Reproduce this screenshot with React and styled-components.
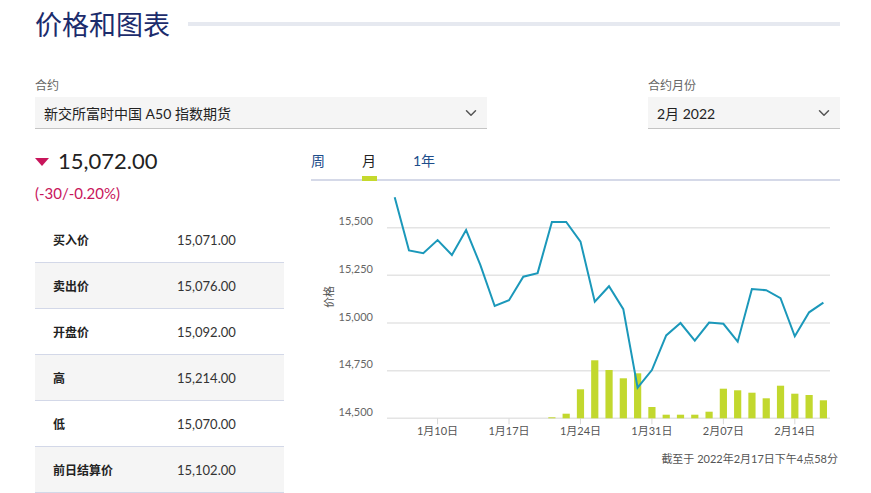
import React from 'react';
import styled, { createGlobalStyle } from 'styled-components';
import { ChevronDown } from 'lucide-react';

const GlobalStyle = createGlobalStyle`
  body {
    margin: 0;
    background: #ffffff;
    font-family: Lato, "Noto Sans CJK SC", sans-serif;
    color: #222;
  }
`;

const Page = styled.div`
  width: 871px;
  box-sizing: border-box;
  padding: 8px 31px 0 35px;
`;

const Header = styled.header`
  display: flex;
  align-items: center;
  gap: 18px;
  height: 32px;
`;

const Title = styled.h1`
  margin: 0;
  font-size: 27px;
  line-height: 32px;
  font-weight: 400;
  color: #1c2c6c;
  font-family: "Noto Sans CJK SC", sans-serif;
`;

const TitleRule = styled.div`
  flex: 1;
  height: 4px;
  background: #e6e9f0;
`;

const SelectRow = styled.div`
  display: flex;
  justify-content: space-between;
  margin-top: 38px;
`;

const Field = styled.div`
  width: ${(p) => p.width}px;
`;

const FieldLabel = styled.div`
  font-size: 12px;
  line-height: 16px;
  color: #666;
  margin-bottom: 3px;
`;

const Select = styled.div`
  display: flex;
  align-items: center;
  justify-content: space-between;
  height: 32px;
  box-sizing: border-box;
  padding: 0 7px 0 9px;
  background: #f5f5f5;
  border-bottom: 1px solid #c4c4c4;
  font-size: 14px;
  color: #222;
  svg {
    color: #555;
  }
`;

const Body = styled.div`
  display: flex;
  gap: 27px;
  margin-top: 19px;
`;

const Summary = styled.div`
  width: 249px;
`;

const PriceRow = styled.div`
  display: flex;
  align-items: center;
  gap: 9px;
  height: 26px;
`;

const DownArrow = styled.span`
  width: 0;
  height: 0;
  border-left: 7px solid transparent;
  border-right: 7px solid transparent;
  border-top: 8px solid #c8155b;
  margin-top: 2px;
`;

const Price = styled.div`
  font-size: 22px;
  line-height: 26px;
  color: #222;
`;

const Change = styled.div`
  margin-top: 9px;
  font-size: 15px;
  line-height: 20px;
  color: #c8155b;
`;

const Table = styled.div`
  margin-top: 14px;
`;

const Row = styled.div`
  display: flex;
  align-items: center;
  height: 46px;
  box-sizing: border-box;
  border-bottom: 1px solid #d3d8e8;
  background: ${(p) => (p.shaded ? '#f5f5f5' : '#ffffff')};
`;

const RowLabel = styled.div`
  width: 124px;
  padding-left: 18px;
  font-family: "Noto Sans CJK SC", sans-serif;
  font-weight: 700;
  font-size: 12px;
  color: #222;
`;

const RowValue = styled.div`
  font-size: 13px;
  color: #333;
`;

const ChartPanel = styled.div`
  flex: 1;
`;

const Tabs = styled.div`
  display: flex;
  padding-top: 3px;
  border-bottom: 2px solid #d5d9e8;
`;

const Tab = styled.div`
  position: relative;
  width: 51px;
  padding: 0 0 8px 0;
  font-size: 14px;
  line-height: 20px;
  color: ${(p) => (p.active ? '#222' : '#1d4d8a')};
  &::after {
    content: '';
    display: ${(p) => (p.active ? 'block' : 'none')};
    position: absolute;
    left: 0;
    bottom: -2px;
    width: 15px;
    height: 5px;
    background: #c5d92d;
  }
`;

const ChartSvg = styled.svg`
  display: block;
  font-family: Lato, "Noto Sans CJK SC", sans-serif;
`;

const Footnote = styled.div`
  text-align: right;
  font-size: 11px;
  line-height: 16px;
  color: #555;
  padding-right: 2px;
`;

const prices = [
  15660, 15381, 15366, 15435, 15357, 15488, 15304, 15089, 15119, 15243, 15262,
  15530, 15530, 15427, 15112, 15193, 15073, 14661, 14753, 14935, 15000, 14907,
  15002, 14996, 14902, 15178, 15172, 15130, 14930, 15056, 15107,
];

// volume bar heights in px, starting from trading day 11
const volumes = [
  1, 4.6, 29, 58, 48.3, 40, 45, 11.3, 3.6, 3.6, 3.6, 6.6, 29.6, 28, 25.6, 20,
  32.6, 24.6, 23.3, 18,
];

const OX = 311;
const OY = 181;
const X0 = 394.7 - OX;
const STEP = 14.29;
const BASE = 418.3 - OY;
const GRID = 47.65;
const yFor = (p) => BASE - ((p - 14500) / 250) * GRID;

const yTicks = ['14,500', '14,750', '15,000', '15,250', '15,500'];
const xTicks = [
  { i: 3, label: '1月10日' },
  { i: 8, label: '1月17日' },
  { i: 13, label: '1月24日' },
  { i: 18, label: '1月31日' },
  { i: 23, label: '2月07日' },
  { i: 28, label: '2月14日' },
];

function PriceChart() {
  const line = prices
    .map((p, i) => `${(X0 + i * STEP).toFixed(1)},${yFor(p).toFixed(1)}`)
    .join(' ');
  return (
    <ChartSvg width="529" height="270" viewBox="0 0 529 270">
      {yTicks.map((t, k) => (
        <g key={t}>
          <line x1="76" x2="519" y1={BASE - k * GRID} y2={BASE - k * GRID} stroke="#e4e4e4" strokeWidth="1.5" />
          <text x="62" y={BASE - k * GRID - 5} textAnchor="end" dominantBaseline="middle" fontSize="11" fill="#666">
            {t}
          </text>
        </g>
      ))}
      <text x="19" y="116" fontSize="11" fill="#555" textAnchor="middle" dominantBaseline="middle" transform="rotate(-90 19 116)">
        价格
      </text>
      {xTicks.map(({ i, label }) => (
        <g key={label}>
          <line x1={X0 + i * STEP} x2={X0 + i * STEP} y1={BASE} y2={BASE + 6} stroke="#d8d8d8" strokeWidth="1" />
          <text x={X0 + i * STEP} y={BASE + 14} textAnchor="middle" dominantBaseline="middle" fontSize="11" fill="#555">
            {label}
          </text>
        </g>
      ))}
      {volumes.map((h, k) => (
        <rect key={k} x={X0 + (k + 11) * STEP - 3.6} y={BASE - h} width="7.2" height={h} fill="#c2d82e" />
      ))}
      <polyline points={line} fill="none" stroke="#1b98ba" strokeWidth="2" strokeLinejoin="miter" />
    </ChartSvg>
  );
}

const rows = [
  ['买入价', '15,071.00'],
  ['卖出价', '15,076.00'],
  ['开盘价', '15,092.00'],
  ['高', '15,214.00'],
  ['低', '15,070.00'],
  ['前日结算价', '15,102.00'],
];

export default function App() {
  return (
    <Page>
      <GlobalStyle />
      <Header>
        <Title>价格和图表</Title>
        <TitleRule />
      </Header>

      <SelectRow>
        <Field width={452}>
          <FieldLabel>合约</FieldLabel>
          <Select>
            新交所富时中国 A50 指数期货
            <ChevronDown size={18} strokeWidth={2} />
          </Select>
        </Field>
        <Field width={192}>
          <FieldLabel>合约月份</FieldLabel>
          <Select>
            2月 2022
            <ChevronDown size={18} strokeWidth={2} />
          </Select>
        </Field>
      </SelectRow>

      <Body>
        <Summary>
          <PriceRow>
            <DownArrow />
            <Price>15,072.00</Price>
          </PriceRow>
          <Change>(-30/-0.20%)</Change>
          <Table>
            {rows.map(([label, value], i) => (
              <Row key={label} shaded={i % 2 === 1}>
                <RowLabel>{label}</RowLabel>
                <RowValue>{value}</RowValue>
              </Row>
            ))}
          </Table>
        </Summary>

        <ChartPanel>
          <Tabs>
            <Tab>周</Tab>
            <Tab active>月</Tab>
            <Tab>1年</Tab>
          </Tabs>
          <PriceChart />
          <Footnote>截至于 2022年2月17日下午4点58分</Footnote>
        </ChartPanel>
      </Body>
    </Page>
  );
}
